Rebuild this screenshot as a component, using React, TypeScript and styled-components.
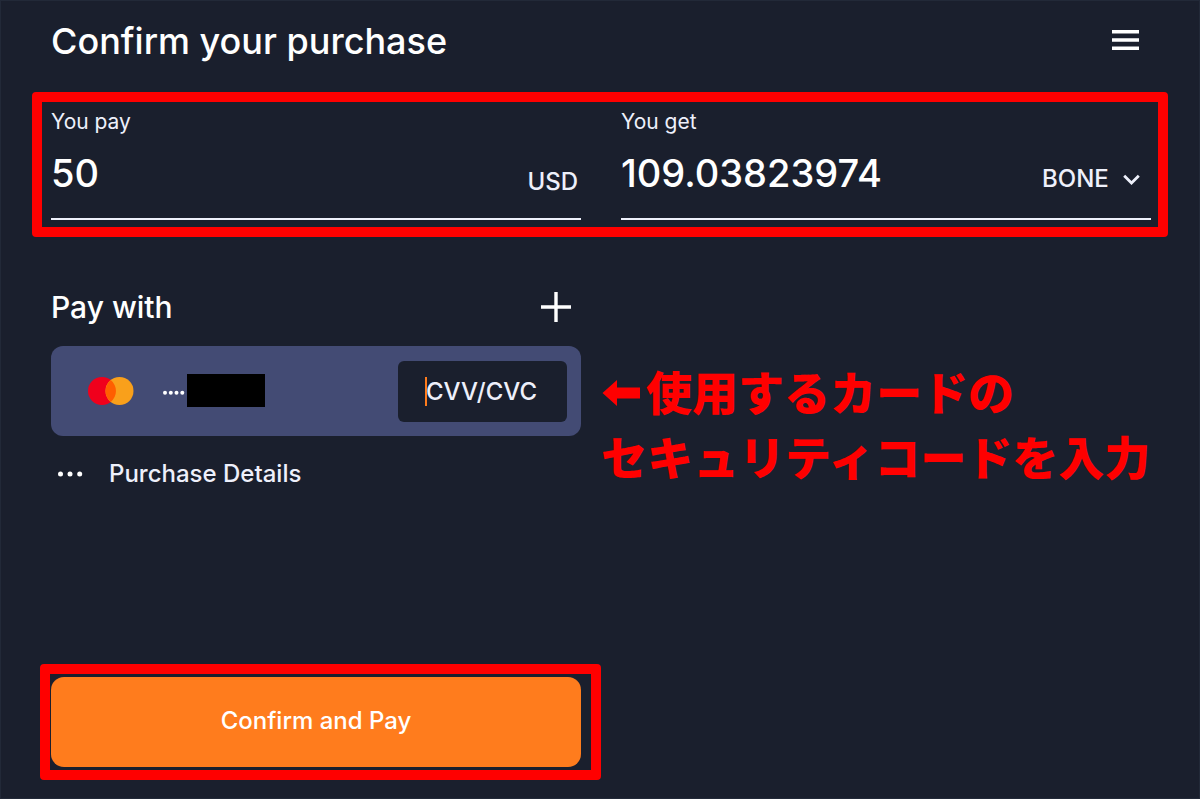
import React from "react";
import styled, { createGlobalStyle } from "styled-components";

const colors = {
  page: "#1a1f2d",
  edge: "#222938",
  card: "#434b74",
  accent: "#ff7c1d",
  mark: "#ff0000",
  text: "#ffffff",
  soft: "#eef0fb",
};

const GlobalStyle = createGlobalStyle`
  *, *::before, *::after { box-sizing: border-box; }
  body { margin: 0; background: ${colors.page}; }
  input, select, button { font: inherit; color: inherit; margin: 0; padding: 0; border: 0; background: none; outline: none; }
  button, select { cursor: pointer; }
`;

const Page = styled.main`
  display: flex;
  flex-direction: column;
  min-height: 100vh;
  padding: 0 48px 31px 50px;
  border: 1px solid ${colors.edge};
  background: ${colors.page};
  color: ${colors.text};
  font-family: Inter, "Liberation Sans", sans-serif;
  font-weight: 500;
`;

const Header = styled.header`
  display: flex;
  align-items: center;
  justify-content: space-between;
  height: 80px;
  margin-bottom: 20px;
`;

const Title = styled.h1`
  margin: 0;
  font-size: 36px;
  line-height: 44px;
  font-weight: 500;
`;

const IconButton = styled.button`
  display: flex;
  margin-right: 12px;
`;

const AddButton = styled(IconButton)`
  margin-right: 10px;
`;

const Highlight = styled.div<{ $inset: string }>`
  position: relative;
  &::after {
    content: "";
    position: absolute;
    inset: ${(p) => p.$inset};
    border: 10px solid ${colors.mark};
    border-radius: 4px;
    pointer-events: none;
  }
`;

const Columns = styled.div`
  display: grid;
  grid-template-columns: minmax(0, 1fr) minmax(0, 1fr);
  column-gap: 40px;
`;

const Field = styled.div`
  display: flex;
  flex-direction: column;
  border-bottom: 2px solid ${colors.soft};
  padding: 9px 0 20px;
`;

const FieldLabel = styled.label`
  font-size: 21px;
  line-height: 24px;
  font-weight: 400;
  color: ${colors.soft};
`;

const FieldRow = styled.div`
  display: flex;
  align-items: flex-end;
  margin-top: 15px;
  height: 49px;
`;

const Amount = styled.input`
  flex: 1;
  min-width: 0;
  height: 48px;
  font-size: 38px;
  line-height: 48px;
  align-self: flex-start;
`;

const Currency = styled.span`
  padding-right: 3px;
  font-size: 24px;
  line-height: 32px;
  color: ${colors.soft};
`;

const CurrencyPicker = styled.div`
  display: flex;
  align-items: center;
  gap: 14px;
  padding: 0 11px 3px 0;
  color: ${colors.soft};
`;

const CurrencySelect = styled.select`
  appearance: none;
  font-size: 24px;
  line-height: 32px;
`;

const PayColumn = styled.section`
  display: flex;
  flex-direction: column;
`;

const PayHeader = styled.div`
  display: flex;
  align-items: center;
  justify-content: space-between;
  height: 48px;
  margin-bottom: 15px;
`;

const Subtitle = styled.h2`
  margin: 0;
  font-size: 30px;
  line-height: 36px;
  font-weight: 500;
`;

const Card = styled.div`
  display: flex;
  align-items: center;
  height: 90px;
  padding: 0 14px 0 37px;
  border-radius: 12px;
  background: ${colors.card};
`;

const MaskedDigits = styled.div`
  display: flex;
  align-items: center;
  gap: 2px;
  margin: 0 auto 2px 29px;
`;

const Redaction = styled.span`
  width: 78px;
  height: 33px;
  background: #000;
`;

const CodeBox = styled.div`
  position: relative;
  width: 169px;
  height: 61px;
  border-radius: 6px;
  background: ${colors.page};
`;

const CodeInput = styled.input`
  width: 100%;
  height: 100%;
  padding-left: 28px;
  font-size: 24px;
  caret-color: ${colors.accent};
  &::placeholder { color: ${colors.soft}; opacity: 1; }
`;

const Caret = styled.span`
  position: absolute;
  left: 27px;
  top: 16px;
  width: 2px;
  height: 29px;
  background: ${colors.accent};
`;

const DetailsButton = styled.button`
  display: flex;
  align-items: center;
  align-self: flex-start;
  gap: 24px;
  margin-top: 22px;
  padding-left: 6px;
  font-size: 24px;
  line-height: 32px;
  color: ${colors.soft};
`;

const PaySection = styled(Columns)`
  margin-top: 63px;
`;

const Note = styled.p`
  margin: 75px -30px 0 -20px;
  font-family: "Noto Sans CJK JP", sans-serif;
  font-size: 46px;
  line-height: 65px;
  font-weight: 900;
  color: ${colors.mark};
  white-space: nowrap;

  svg { vertical-align: 4px; }
`;

const Footer = styled(Columns)`
  margin-top: auto;
`;

const PayButton = styled.button`
  display: block;
  width: 100%;
  height: 90px;
  padding-bottom: 3px;
  border-radius: 13px;
  background: ${colors.accent};
  font-size: 24px;
  line-height: 32px;
`;

const MenuIcon = () => (
  <svg width="27" height="22" viewBox="0 0 27 22" fill="#fff" aria-hidden="true">
    <path d="M0 0h27v3.5H0zM0 8.2h27v3.5H0zM0 16.4h27v3.5H0z" />
  </svg>
);

const PlusIcon = () => (
  <svg width="30" height="30" viewBox="0 0 30 30" fill="none" stroke="#fff" strokeWidth="3.4" aria-hidden="true">
    <path d="M15 0v30M0 15h30" />
  </svg>
);

const ChevronIcon = () => (
  <svg width="17" height="12" viewBox="0 0 17 12" fill="none" stroke={colors.soft} strokeWidth="2.8" aria-hidden="true">
    <path d="M1.2 2.8 8.5 10 15.8 2.8" />
  </svg>
);

const CardBrand = () => (
  <svg width="46" height="28" viewBox="0 0 46 28" role="img" aria-label="Mastercard">
    <circle cx="14" cy="14" r="14" fill="#f0001c" />
    <circle cx="31.5" cy="14" r="14" fill="#f9a01b" />
    <path d="M22.75 3.1a14 14 0 0 1 0 21.8a14 14 0 0 1 0-21.8z" fill="#ff5f00" />
  </svg>
);

const MaskDots = () => (
  <svg width="22" height="9" viewBox="0 0 22 9" fill="#fff" aria-hidden="true">
    {[2, 7.8, 13.5, 19.3].map((x) => (
      <circle key={x} cx={x} cy="6.8" r="2" />
    ))}
  </svg>
);

const MoreIcon = () => (
  <svg width="28" height="6" viewBox="0 0 28 6" fill="#fff" aria-hidden="true">
    {[3.5, 13, 22.7].map((x) => (
      <circle key={x} cx={x} cy="3" r="2.5" />
    ))}
  </svg>
);

const ArrowIcon = () => (
  <svg width="45" height="26" viewBox="0 0 45 26" fill={colors.mark} aria-hidden="true">
    <path d="M1.5 13 16 0v7.5h23v11H16V26z" />
  </svg>
);

export default function App() {
  return (
    <Page>
      <GlobalStyle />
      <Header>
        <Title>Confirm your purchase</Title>
        <IconButton aria-label="Menu">
          <MenuIcon />
        </IconButton>
      </Header>

      <Highlight $inset="-9px -17px -17px -19px">
        <Columns>
          <Field>
            <FieldLabel htmlFor="pay">You pay</FieldLabel>
            <FieldRow>
              <Amount id="pay" defaultValue="50" />
              <Currency>USD</Currency>
            </FieldRow>
          </Field>
          <Field>
            <FieldLabel htmlFor="get">You get</FieldLabel>
            <FieldRow>
              <Amount id="get" defaultValue="109.03823974" />
              <CurrencyPicker>
                <CurrencySelect aria-label="Currency to get" defaultValue="BONE">
                  <option>BONE</option>
                </CurrencySelect>
                <ChevronIcon />
              </CurrencyPicker>
            </FieldRow>
          </Field>
        </Columns>
      </Highlight>

      <PaySection>
        <PayColumn>
          <PayHeader>
            <Subtitle>Pay with</Subtitle>
            <AddButton aria-label="Add a card">
              <PlusIcon />
            </AddButton>
          </PayHeader>
          <Card>
            <CardBrand />
            <MaskedDigits>
              <MaskDots />
              <Redaction />
            </MaskedDigits>
            <CodeBox>
              <CodeInput aria-label="Security code" placeholder="CVV/CVC" />
              <Caret />
            </CodeBox>
          </Card>
          <DetailsButton>
            <MoreIcon />
            Purchase Details
          </DetailsButton>
        </PayColumn>
        <Note lang="ja">
          <ArrowIcon />
          使用するカードの
          <br />
          セキュリティコードを入力
        </Note>
      </PaySection>

      <Footer>
        <Highlight $inset="-13px -20px -13px -11px">
          <PayButton>Confirm and Pay</PayButton>
        </Highlight>
      </Footer>
    </Page>
  );
}
